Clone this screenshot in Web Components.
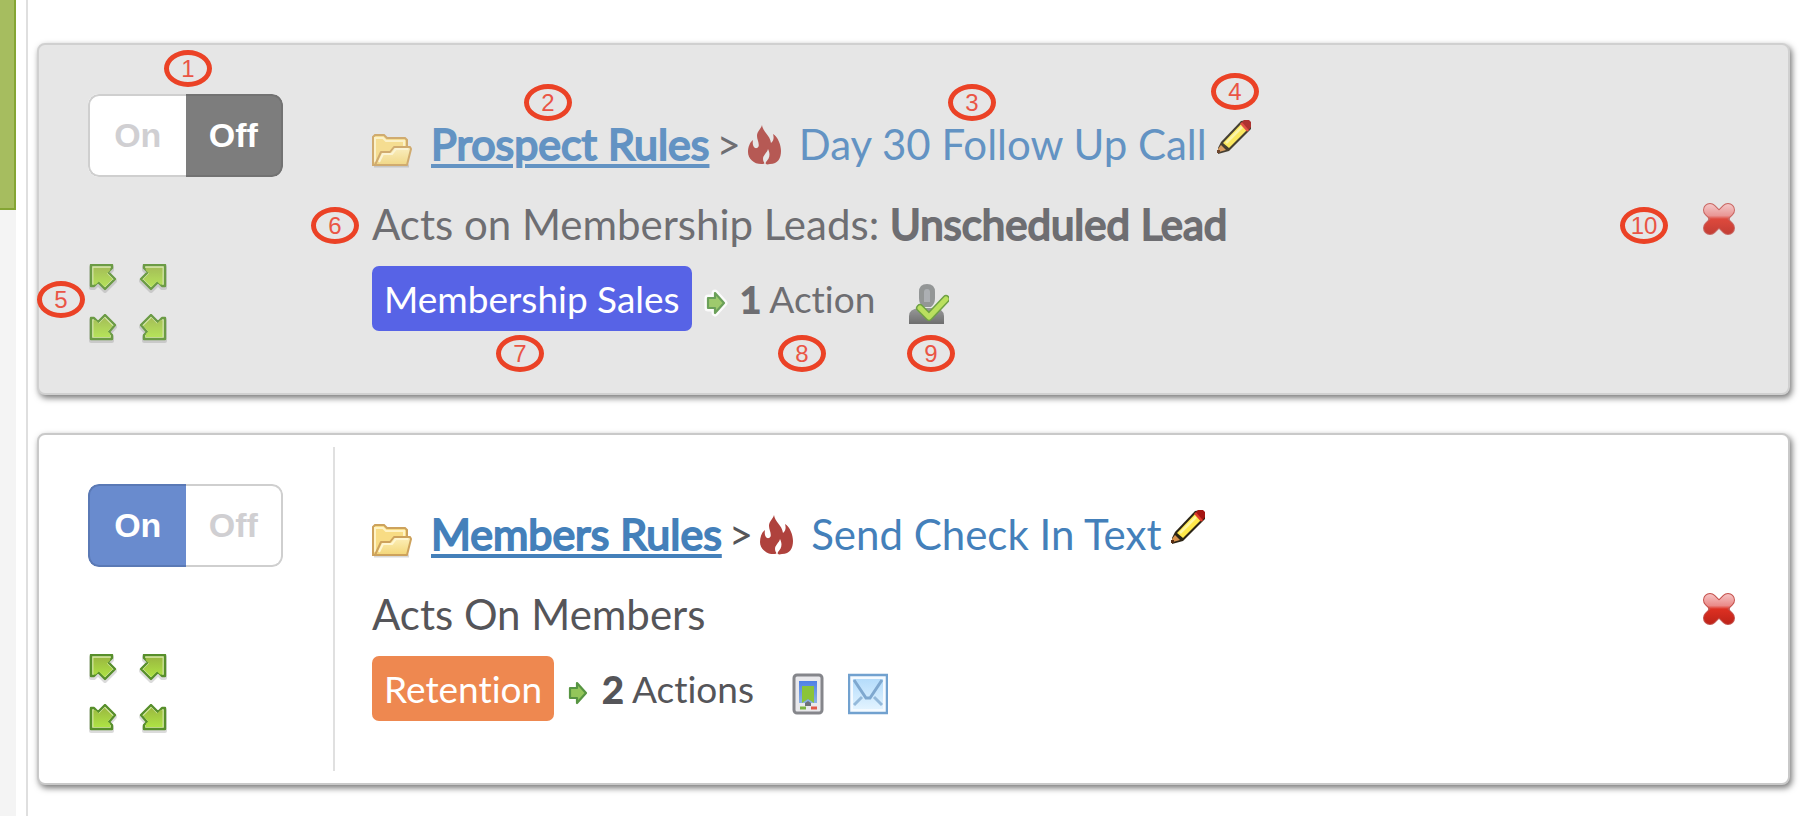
<!DOCTYPE html>
<html lang="en">
<head>
<meta charset="utf-8">
<title>Automation rules</title>
<style>
  html, body { margin: 0; min-height: 100%; }
  body { background: #fff; font-family: Lato, "Open Sans", sans-serif; font-variant-ligatures: none; color: #555559; }
</style>
</head>
<body>
<rules-page>
  <rule-card inactive>
    <on-off-switch slot="switch" value="off"></on-off-switch>
    <a slot="folder" href="#prospect">Prospect Rules</a>
    <a slot="name" href="#day30">Day 30 Follow Up Call</a>
    <span slot="target">Acts on Membership Leads: <b>Unscheduled Lead</b></span>
    <rule-tag slot="tag" color="#5763e6">Membership Sales</rule-tag>
    <span slot="count"><b>1</b> Action</span>
    <rule-icon slot="actions" name="person"></rule-icon>
    <callout-pin slot="pins" style="left:125px;top:5px">1</callout-pin>
    <callout-pin slot="pins" style="left:485px;top:39px">2</callout-pin>
    <callout-pin slot="pins" style="left:909px;top:39px">3</callout-pin>
    <callout-pin slot="pins" style="left:1172px;top:28px">4</callout-pin>
    <callout-pin slot="pins" style="left:-2px;top:236px">5</callout-pin>
    <callout-pin slot="pins" style="left:272px;top:162px">6</callout-pin>
    <callout-pin slot="pins" style="left:457px;top:290px">7</callout-pin>
    <callout-pin slot="pins" style="left:739px;top:290px">8</callout-pin>
    <callout-pin slot="pins" style="left:868px;top:290px">9</callout-pin>
    <callout-pin slot="pins" style="right:120px;top:162px">10</callout-pin>
  </rule-card>
  <rule-card>
    <on-off-switch slot="switch" value="on"></on-off-switch>
    <a slot="folder" href="#members">Members Rules</a>
    <a slot="name" href="#checkin">Send Check In Text</a>
    <span slot="target">Acts On Members</span>
    <rule-tag slot="tag" color="#ee8850">Retention</rule-tag>
    <span slot="count"><b>2</b> Actions</span>
    <rule-icon slot="actions" name="phone"></rule-icon>
    <rule-icon slot="actions" name="mail"></rule-icon>
  </rule-card>
</rules-page>

<script>
const arrow = pts => [30, 30, `
  <linearGradient id="g" x1="0" y1="0" x2="0" y2="1"><stop offset="0" stop-color="#9bb940"/><stop offset="1" stop-color="#aee344"/></linearGradient>
  <polygon points="${pts}" transform="translate(0 2)" fill="none" stroke="#000" stroke-opacity=".14" stroke-width="4" stroke-linejoin="round"/>
  <polygon points="${pts}" fill="#dcebaa" stroke="#578f2b" stroke-width="2.4" stroke-linejoin="round"/>
  <polygon points="${pts}" fill="url(#g)" transform="translate(3 3) scale(.8)"/>`];

const ICONS = {
  nw: arrow('3,1 24,1 24,4 20,8 27,15 17,25 10,18 6,22 3,22'),
  ne: arrow('27,1 6,1 6,4 10,8 3,15 13,25 20,18 24,22 27,22'),
  sw: arrow('3,25 24,25 24,21 21,18 27,11 17,1 10,8 6,4 3,4'),
  se: arrow('27,25 6,25 6,21 9,18 3,11 13,1 20,8 24,4 27,4'),
  folder: [40, 48, `
    <linearGradient id="g" x1="0" y1="0" x2="0" y2="1"><stop offset="0" stop-color="#fdf0bb"/><stop offset="1" stop-color="#f3d678"/></linearGradient>
    <path d="M2 46H37" stroke="#000" stroke-opacity=".15" stroke-width="3"/>
    <path d="M1 45V17l2-2h9l3 3h18l2 2v20l-4 5z" fill="#f8dc84" stroke="#cda25c" stroke-width="2"/>
    <path d="M3 42V18h8l3 3h18v5" fill="none" stroke="#fff3c4" stroke-width="2"/>
    <path d="M3 45l6-13h9l4-5h16l1 2-4 16z" fill="url(#g)" stroke="#cda25c" stroke-width="2" stroke-linejoin="round"/>
    <path d="M7 42l4-8h9l4-5h12" fill="none" stroke="#fff6d0" stroke-width="2"/>`],
  flame: [34, 48, `<path fill="#af423d" d="M14 5C15 12 22 15 23 23C26 21 26 17 25 14C30 17 33 25 33 31C33 38 30 44 22 44C18 45 17 44 18 42C21 39 23 35 20 29C19 33 15 35 15 39C15 42 18 44 15 44C7 45 0 39 0 32C0 27 2 22 5 20C4 25 6 29 9 28C13 26 9 20 9 16C9 11 13 9 14 5Z"/>`],
  pencil: [34, 48, `
    <path d="M24 1L31 0L34 3V9L12 31L1 34V28L4 22Z" fill="#2c2515"/>
    <path d="M24 4L30 10L12 28L6 23Z" fill="#ffe94a"/>
    <path d="M25 7L9 23" stroke="#fff7a0" stroke-width="2.5"/>
    <path d="M24 3L27 0H32L34 2V7L31 11Z" fill="#a51613"/><path d="M24 3l7 8" stroke="#e03a2b" stroke-width="2.5"/>
    <path d="M4 25l5 5-7 2-1-3z" fill="#d9934d"/><path d="M0 30h3v3H0z" fill="#5b2d12"/>`],
  next: [24, 64, `
    <path d="M4 32h7v-5l9 10-9 10v-5H4z" fill="none" stroke="var(--halo, transparent)" stroke-width="7" stroke-linejoin="round"/>
    <path d="M4 32h7v-5l9 10-9 10v-5H4z" fill="#93c65a" stroke="#579542" stroke-width="2.2" stroke-linejoin="round"/>`],
  person: [40, 64, `
    <linearGradient id="g" x1="0" y1="0" x2="0" y2="1"><stop offset="0" stop-color="#8c8d8e"/><stop offset="1" stop-color="#5b5b5b"/></linearGradient>
    <path d="M10 26q0-8 8-8t8 8v6q0 6-4 9h-8q-4-3-4-9z" fill="#86898a"/><path d="M15 26q0-3 3-3t3 3v10h-6z" fill="#a3a7ab"/>
    <path d="M0 58V50q0-7 10-8h15q10 1 10 8v8z" fill="url(#g)"/>
    <path d="M11 42l9 9L37 33" fill="none" stroke="#5c962b" stroke-width="8" stroke-linejoin="round" stroke-linecap="round"/>
    <path d="M11 42l9 9L37 33" fill="none" stroke="#b3e04a" stroke-width="5" stroke-linejoin="round" stroke-linecap="round"/>`],
  phone: [40, 64, `
    <linearGradient id="g" x1="0" y1="0" x2="0" y2="1"><stop offset="0" stop-color="#4f80e6"/><stop offset="1" stop-color="#8cb2e4"/></linearGradient>
    <rect x="6" y="19" width="28" height="38" rx="3" fill="#e9e9ec" stroke="#85868b" stroke-width="3"/>
    <rect x="11" y="25" width="18" height="22" fill="url(#g)"/><path d="M14 30h12v17l-6-4-6 4z" fill="#8bc43a"/>
    <path d="M17 47l3-2 3 2v3h-6z" fill="#6d7178"/>
    <path d="M12 52h6" stroke="#7cb342" stroke-width="3"/><path d="M23 52h6" stroke="#e2594a" stroke-width="3"/>`],
  mail: [40, 64, `
    <linearGradient id="g" x1="0" y1="0" x2="0" y2="1"><stop offset="0" stop-color="#b4dcfb"/><stop offset="1" stop-color="#e2f3ff"/></linearGradient>
    <rect x="1" y="19" width="38" height="38" fill="#f4faff" stroke="#71a1cf" stroke-width="2.5"/>
    <rect x="5" y="23" width="30" height="30" fill="url(#g)"/>
    <path d="M6 49l8-8M34 49l-8-8" stroke="#94b9da" stroke-width="3"/>
    <path d="M6 24L18 42h4L34 24" fill="none" stroke="#7fa8cf" stroke-width="3"/>`],
  remove: [34, 34, `
    <linearGradient id="g" x1="0" y1="0" x2="0" y2="34" gradientUnits="userSpaceOnUse"><stop offset=".1" stop-color="#f5bcbc"/><stop offset=".4" stop-color="#ea8a88"/><stop offset=".5" stop-color="#dd3022"/><stop offset="1" stop-color="#b92117"/></linearGradient>
    <path d="M8 8L26 26M26 8L8 26M13 17h8" stroke="#c4504b" stroke-width="14" stroke-linecap="round"/>
    <path d="M8 8L26 26M26 8L8 26" stroke="url(#g)" stroke-width="12" stroke-linecap="round"/>`]
};

class RuleIcon extends HTMLElement {
  constructor() { super(); this.attachShadow({ mode: 'open' }); }
  connectedCallback() {
    const [w, h, art] = ICONS[this.getAttribute('name')];
    this.shadowRoot.innerHTML = `<style>:host{display:block;flex:none;opacity:var(--icon-opacity,1)}svg{display:block}</style>
      <svg width="${w}" height="${h}" viewBox="0 0 ${w} ${h}" aria-hidden="true">${art}</svg>`;
  }
}

class CalloutPin extends HTMLElement {
  constructor() {
    super();
    this.attachShadow({ mode: 'open' }).innerHTML = `<style>
      :host{position:absolute;box-sizing:border-box;width:48px;height:37px;border:5px solid #eb4226;border-radius:50%;
        display:grid;place-items:center;font:24px/28px "Liberation Sans",Arial,sans-serif;color:#ea5545}
    </style><slot></slot>`;
  }
}

class RuleTag extends HTMLElement {
  constructor() {
    super();
    this.attachShadow({ mode: 'open' }).innerHTML = `<style>
      :host{display:block;flex:none;padding:0 12px;border-radius:7px;color:#fff;line-height:65px;white-space:nowrap}
    </style><slot></slot>`;
  }
  connectedCallback() { this.style.backgroundColor = this.getAttribute('color'); }
}

class OnOffSwitch extends HTMLElement {
  constructor() { super(); this.attachShadow({ mode: 'open' }); }
  connectedCallback() {
    const on = this.getAttribute('value') === 'on';
    this.shadowRoot.innerHTML = `<style>
      :host{display:flex;box-sizing:border-box;width:195px;height:83px;border-radius:11px;overflow:hidden;
        font:bold 34px/79px "Liberation Sans",Arial,sans-serif;color:#d0cfd2;background:#fff}
      label{flex:1;box-sizing:border-box;text-align:center;border:2px solid #cfcfcf}
      label:first-of-type{border-radius:11px 0 0 11px;border-right:0}
      label:last-of-type{border-radius:0 11px 11px 0;border-left:0}
      input{position:absolute;appearance:none;margin:0;width:0;height:0}
      label:has(:checked){color:#fff;background:#7d7d7d;border-color:#727272}
      label.on:has(:checked){background:#698bce;border-color:#5a79b5}
    </style>
    <label class="on"><input type="radio" name="state" value="on" ${on ? 'checked' : ''}>On</label>
    <label><input type="radio" name="state" value="off" ${on ? '' : 'checked'}>Off</label>`;
  }
}

class RuleCard extends HTMLElement {
  constructor() {
    super();
    this.attachShadow({ mode: 'open' }).innerHTML = `<style>
      :host{position:relative;display:flex;border:2px solid #c9c9c9;border-radius:8px;background:#fff;
        box-shadow:2px 3px 6px #777;font-size:42px;line-height:60px;--link:#4480ba}
      :host([inactive]){background:#e6e6e6;border-color:#d0d0d0;color:#6e6e72;--link:#6393c3;--icon-opacity:.86;--halo:#fff}
      .side{flex:none;box-sizing:border-box;width:296px;margin:12px 0;padding:37px 0 0 49px;border-right:2px solid #e0e0e0}
      :host([inactive]) .side{border-color:transparent}
      .moves{display:grid;grid-template-columns:30px 30px;gap:20px;margin-top:87px}
      button{display:block;padding:0;border:0;background:none;cursor:pointer}
      .body{flex:1;min-width:0;padding:69px 0 62px 37px}
      .row{display:flex;align-items:center;white-space:nowrap}
      .title{margin-bottom:20px}
      .target{margin-bottom:12px}
      .summary{align-items:flex-start;font-size:37px;line-height:65px}
      .sep{margin:0 7px}
      .folder{margin-left:19px}
      .name{margin:0 10px 0 17px}
      .next{margin:0 12px}
      .actions{display:flex;gap:20px;margin-left:34px}
      .remove{align-self:center;margin-right:52px}
      ::slotted(a){color:var(--link);text-decoration:none}
      ::slotted(a[slot=folder]){font-size:43px;-webkit-text-stroke:2px var(--link);text-decoration:underline;text-decoration-thickness:4px;text-underline-offset:4px}
    </style>
    <div class="side">
      <slot name="switch"></slot>
      <div class="moves">
        <button aria-label="Move to top"><rule-icon name="nw"></rule-icon></button>
        <button aria-label="Move up"><rule-icon name="ne"></rule-icon></button>
        <button aria-label="Move to bottom"><rule-icon name="sw"></rule-icon></button>
        <button aria-label="Move down"><rule-icon name="se"></rule-icon></button>
      </div>
    </div>
    <div class="body">
      <div class="row title">
        <rule-icon name="folder"></rule-icon>
        <span class="folder"><slot name="folder"></slot></span>
        <span class="sep">&gt;</span>
        <rule-icon name="flame"></rule-icon>
        <span class="name"><slot name="name"></slot></span>
        <button aria-label="Edit name"><rule-icon name="pencil"></rule-icon></button>
      </div>
      <div class="row target"><slot name="target"></slot></div>
      <div class="row summary">
        <slot name="tag"></slot>
        <rule-icon class="next" name="next"></rule-icon>
        <slot name="count"></slot>
        <div class="actions"><slot name="actions"></slot></div>
      </div>
    </div>
    <button class="remove" aria-label="Delete rule"><rule-icon name="remove"></rule-icon></button>
    <slot name="pins"></slot>`;
  }
  connectedCallback() {
    for (const b of this.querySelectorAll('b')) {
      b.style.fontWeight = 'normal';
      b.style.webkitTextStroke = '2px currentColor';
    }
  }
}

class RulesPage extends HTMLElement {
  constructor() {
    super();
    this.attachShadow({ mode: 'open' }).innerHTML = `<style>
      :host{display:flex;min-height:100vh}
      aside{flex:none;width:16px;background:#f4f4f4}
      .current{box-sizing:border-box;height:210px;background:#a6bd5f;border:solid #84a533;border-width:0 2px 2px 0}
      main{flex:1;min-width:0;box-sizing:border-box;margin-left:10px;padding:43px 26px 29px 9px;border-left:2px solid #dfdfdf;
        display:flex;flex-direction:column;gap:38px}
    </style>
    <aside><div class="current"></div></aside>
    <main><slot></slot></main>`;
  }
}

customElements.define('rule-icon', RuleIcon);
customElements.define('callout-pin', CalloutPin);
customElements.define('rule-tag', RuleTag);
customElements.define('on-off-switch', OnOffSwitch);
customElements.define('rule-card', RuleCard);
customElements.define('rules-page', RulesPage);
</script>
</body>
</html>
